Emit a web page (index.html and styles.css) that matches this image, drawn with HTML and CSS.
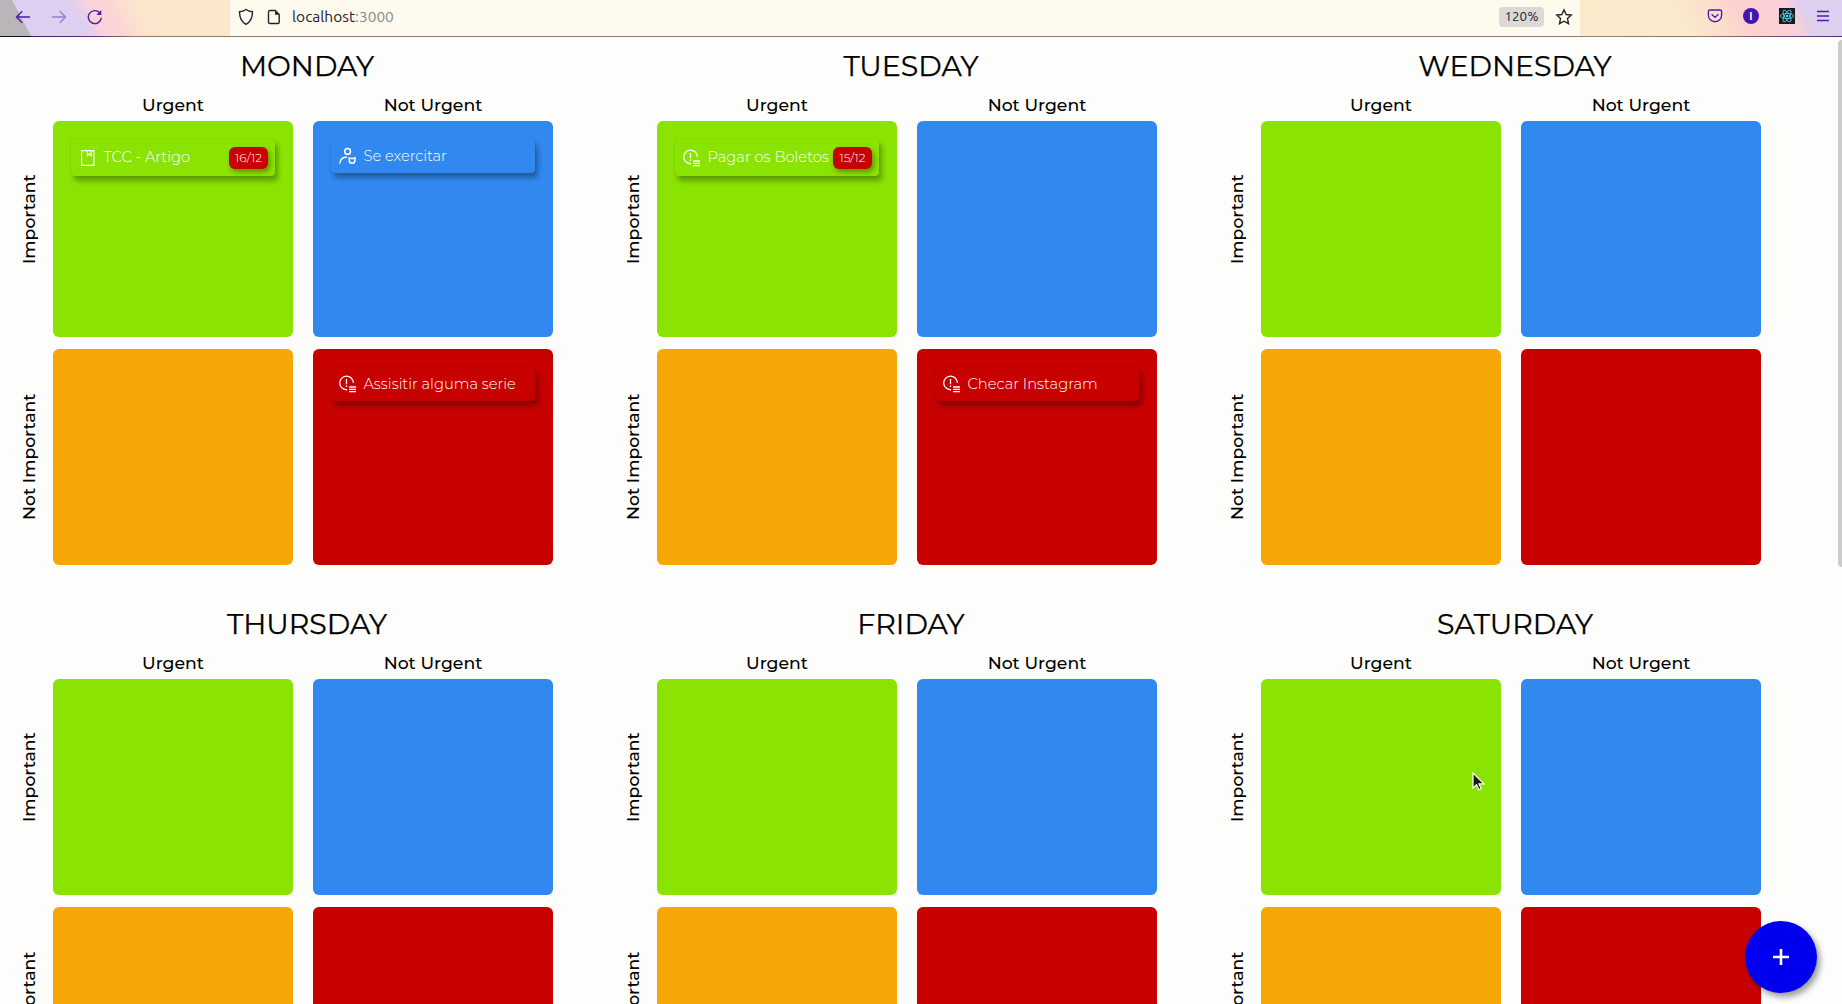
FILE: index.html
```html
<!DOCTYPE html>
<html lang="en">
<head>
<meta charset="utf-8">
<title>Week planner</title>
<link rel="stylesheet" href="styles.css">
</head>
<body>
<svg class="sprite" aria-hidden="true">
  <symbol id="i-book" viewBox="0 0 18 18" fill="none" stroke="currentColor" stroke-width="1.2">
    <path d="M2.600 1.600h12.300v14.800H2.600zM8.500 1.600v5l1.800-1.500 1.800 1.500v-5"/>
  </symbol>
  <symbol id="i-user" viewBox="0 0 18 18" fill="none" stroke="currentColor" stroke-width="1.5">
    <circle cx="8.600" cy="4.400" r="2.900"/><path d="M.8 16.500c.4-3.700 3.200-6.300 7.200-6.400M10.300 10.900l2.800.9 2.800-.9v2.600a2.800 2.800 0 0 1-5.600 0z"/>
  </symbol>
  <symbol id="i-alert" viewBox="0 0 18 18" fill="none" stroke="currentColor" stroke-width="1.3">
    <path d="M8.100 14.700A6.800 6.800 0 1 1 14.300 7.900M7.500 4v5.200M7.500 10.400v1.600M10 12h7M10 14.300h7M10 16.600h7"/>
  </symbol>
</svg>

<header class="toolbar">
  <nav class="nav">
    <svg width="16" height="16" viewBox="0 0 16 16"><path d="M15 8H1.500M7.200 2.300L1.500 8l5.700 5.700"/></svg>
    <svg class="muted" width="16" height="16" viewBox="0 0 16 16"><path d="M1 8h13.500M8.800 2.300L14.500 8l-5.700 5.700"/></svg>
    <svg width="16" height="16" viewBox="0 0 16 16"><path d="M14.300 8.700A6.500 6.500 0 1 1 12.600 3.700"/><path class="solid" d="M14.300 1v5H9.300z"/></svg>
  </nav>
  <div class="address">
    <svg width="16" height="18" viewBox="0 0 16 18"><path d="M8 1.500c2 1.600 4 2.300 6.500 2.300 0 5.500-1.400 9.800-6.500 12.600C2.900 13.600 1.500 9.300 1.500 3.800 4 3.800 6 3.100 8 1.500z"/></svg>
    <svg width="14" height="16" viewBox="0 0 14 16"><path d="M2.800 1.500h5.400l4 4v7.700a1.300 1.300 0 0 1-1.300 1.300H2.800a1.300 1.300 0 0 1-1.300-1.300V2.800a1.300 1.300 0 0 1 1.300-1.300z"/><path class="solid" d="M8 1.500v4.200h4.200z"/></svg>
    <span class="url">localhost<span class="port">:3000</span></span>
    <span class="zoom">120%</span>
    <svg class="star" width="18" height="18" viewBox="0 0 18 18"><path d="M9 1.800l2.200 4.700 5 .6-3.700 3.500 1 5.100L9 13.200l-4.500 2.500 1-5.100L1.800 7.100l5-.6z"/></svg>
  </div>
  <div class="extensions">
    <svg width="16" height="16" viewBox="0 0 16 16"><path d="M3 2h10a1.600 1.600 0 0 1 1.600 1.600v3.600a6.600 6.600 0 0 1-13.200 0V3.600A1.600 1.600 0 0 1 3 2zM4.600 6.200L8 9.400l3.400-3.200"/></svg>
    <span class="avatar">I</span>
    <svg class="react" width="16" height="16" viewBox="0 0 16 16"><rect width="16" height="16"/><g><ellipse cx="8" cy="8" rx="6.600" ry="2.600"/><ellipse cx="8" cy="8" rx="6.600" ry="2.600" transform="rotate(60 8 8)"/><ellipse cx="8" cy="8" rx="6.600" ry="2.600" transform="rotate(120 8 8)"/></g><circle cx="8" cy="8" r="1.300"/></svg>
    <svg width="16" height="14" viewBox="0 0 16 14"><path d="M2 2.500h12M2 7h12M2 11.500h12"/></svg>
  </div>
</header>

<main class="week">
  <section class="board">
    <h2 class="day">MONDAY</h2>
    <span class="col first">Urgent</span><span class="col">Not Urgent</span>
    <span class="row upper">Important</span>
    <div class="cell do"><div class="task dated"><svg class="icon"><use href="#i-book"/></svg><span class="title">TCC - Artigo</span><span class="date">16/12</span></div></div>
    <div class="cell plan"><div class="task"><svg class="icon"><use href="#i-user"/></svg><span class="title">Se exercitar</span></div></div>
    <span class="row">Not Important</span>
    <div class="cell delegate"></div>
    <div class="cell drop"><div class="task"><svg class="icon"><use href="#i-alert"/></svg><span class="title">Assisitir alguma serie</span></div></div>
  </section>
  <section class="board">
    <h2 class="day">TUESDAY</h2>
    <span class="col first">Urgent</span><span class="col">Not Urgent</span>
    <span class="row upper">Important</span>
    <div class="cell do"><div class="task dated"><svg class="icon"><use href="#i-alert"/></svg><span class="title">Pagar os Boletos</span><span class="date">15/12</span></div></div>
    <div class="cell plan"></div>
    <span class="row">Not Important</span>
    <div class="cell delegate"></div>
    <div class="cell drop"><div class="task"><svg class="icon"><use href="#i-alert"/></svg><span class="title">Checar Instagram</span></div></div>
  </section>
  <section class="board">
    <h2 class="day">WEDNESDAY</h2>
    <span class="col first">Urgent</span><span class="col">Not Urgent</span>
    <span class="row upper">Important</span><div class="cell do"></div><div class="cell plan"></div>
    <span class="row">Not Important</span><div class="cell delegate"></div><div class="cell drop"></div>
  </section>
  <section class="board">
    <h2 class="day">THURSDAY</h2>
    <span class="col first">Urgent</span><span class="col">Not Urgent</span>
    <span class="row upper">Important</span><div class="cell do"></div><div class="cell plan"></div>
    <span class="row">Not Important</span><div class="cell delegate"></div><div class="cell drop"></div>
  </section>
  <section class="board">
    <h2 class="day">FRIDAY</h2>
    <span class="col first">Urgent</span><span class="col">Not Urgent</span>
    <span class="row upper">Important</span><div class="cell do"></div><div class="cell plan"></div>
    <span class="row">Not Important</span><div class="cell delegate"></div><div class="cell drop"></div>
  </section>
  <section class="board">
    <h2 class="day">SATURDAY</h2>
    <span class="col first">Urgent</span><span class="col">Not Urgent</span>
    <span class="row upper">Important</span><div class="cell do"></div><div class="cell plan"></div>
    <span class="row">Not Important</span><div class="cell delegate"></div><div class="cell drop"></div>
  </section>
</main>

<div class="scrollbar"></div>
<button class="fab" aria-label="Add task"><svg width="18" height="18" viewBox="0 0 18 18"><path d="M9 1v16M1 9h16"/></svg></button>
<svg class="cursor" width="14" height="20" viewBox="0 0 14 20"><path d="M1 1v15l3.600-3.300 2.300 5 2.300-1-2.200-4.800H12z"/></svg>
</body>
</html>
```
FILE: styles.css
```css
* { box-sizing: border-box; }

html { overflow: hidden; }

body {
  margin: 0;
  height: 1004px;
  overflow: hidden;
  position: relative;
  background: #fdfdfb;
  color: #000;
  font-family: Montserrat, Inter, sans-serif;
}

.sprite { position: absolute; width: 0; height: 0; }

/* Browser toolbar */
.toolbar {
  display: flex;
  align-items: center;
  height: 37px;
  border-bottom: 1px solid #8c7a80;
  border-image: linear-gradient(90deg, #111 30px, #3f2070 34px, #5a2c80 95px, #99785f 135px, #8c8078 300px, #8c8078 1600px, #99785f 1700px, #4a2c80 1842px) 1;
  background:
    linear-gradient(62deg, #b9b5b8 27px, transparent 28px),
    linear-gradient(62deg, #dccff0 78px, #f9d2dc 92px, #fbd5d5 108px, #fbe6cd 135px, #fbe8ca 250px, transparent 251px),
    linear-gradient(62deg, #fbeacb 1490px, #fbdccb 1530px, #fbd0cf 1550px, #fad0d8 1590px, #dccff0 1606px);
  font-family: Ubuntu, "Open Sans", sans-serif;
}
.toolbar svg { display: block; flex: none; fill: none; stroke: #4a1fa5; stroke-width: 1.4; }
.toolbar .solid { fill: currentColor; stroke: none; }
.nav { display: flex; gap: 20px; width: 230px; padding: 0 0 3px 15px; color: #4a1fa5; }
.nav .muted { opacity: .45; }

.address {
  display: flex;
  align-items: center;
  width: 1350px;
  height: 36px;
  padding: 0 7px 3px 8px;
  background: #fefaee;
  color: #28202f;
}
.address svg { stroke: #28202f; }
.address svg + svg { margin-left: 13px; }
.url { margin-left: 11px; font-size: 15.500px; line-height: 20px; white-space: pre; }
.port { color: #8d898c; }
.zoom {
  width: 45px;
  height: 20px;
  margin-left: auto;
  border-radius: 4px;
  background: #dad9d6;
  font-size: 13.500px;
  line-height: 19px;
  text-align: center;
}
.address .star { margin-left: 11px; }

.extensions { display: flex; align-items: center; gap: 20px; padding: 0 0 4px 127px; }
.avatar {
  width: 16px;
  height: 16px;
  border-radius: 50%;
  background: #4413b5;
  color: #fff;
  font-size: 11px;
  font-weight: 700;
  line-height: 16px;
  text-align: center;
}
.toolbar .react { stroke: #61dafb; stroke-width: .8; }
.react rect { fill: #141a1c; stroke: none; }
.react circle { fill: #61dafb; stroke: none; }

/* Week grid */
.week {
  display: grid;
  grid-template-columns: repeat(3, 604px);
  grid-template-rows: 558px 399px;
  height: 967px;
  overflow: hidden;
  padding-top: 10px;
}
.board {
  display: grid;
  grid-template-columns: 24px 240px 240px;
  grid-template-rows: 38px 36px 216px 216px;
  column-gap: 20px;
  row-gap: 0;
  align-content: start;
  padding-left: 9px;
}
.day {
  grid-column: 1 / -1;
  margin: 0;
  padding-left: 52px;
  font-size: 28.400px;
  font-weight: 400;
  line-height: 38px;
  text-align: center;
  -webkit-text-stroke: .25px #000;
}
.col, .row { font-size: 17.280px; font-weight: 500; }
.col { line-height: 40px; text-align: center; }
.col.first { grid-column: 2; }
.row {
  writing-mode: vertical-rl;
  transform: rotate(180deg);
  width: 24px;
  margin: 12px 0 -12px 8px;
  line-height: 24px;
  text-align: center;
}
.row.upper { margin-top: -10px; margin-bottom: 10px; }
.cell { padding: 18px; border-radius: 6px; }
.do { background: #8ae303; }
.plan { background: #3188ef; }
.delegate { background: #f6a605; }
.drop { background: #c70000; }
.delegate, .drop { margin: 12px 0 -12px; }

.task {
  display: flex;
  align-items: center;
  height: 34px;
  padding: 0 7px 0 8px;
  border-radius: 4px;
  box-shadow: 3px 5px 5px rgba(0, 0, 0, .3), 0 0 2px rgba(0, 0, 0, .12);
  color: #fff;
}
.task.dated { height: 37px; }
.icon { flex: none; width: 18px; height: 18px; }
.title { margin: -1px 0 0 6.500px; font-size: 14.700px; font-weight: 300; white-space: nowrap; }
.date {
  width: 39px;
  height: 22px;
  margin-left: auto;
  border-radius: 6px;
  background: #c80000;
  box-shadow: 2px 3px 5px rgba(0, 0, 0, .35);
  font-size: 12px;
  font-weight: 300;
  line-height: 22px;
  text-align: center;
}

/* Overlays */
.scrollbar { position: absolute; top: 40px; right: 0; width: 4px; height: 527px; border-radius: 4px 0 0 4px; background: #cdccca; }
.fab {
  position: absolute;
  right: 25px;
  bottom: 11px;
  display: grid;
  place-items: center;
  width: 72px;
  height: 72px;
  padding: 0;
  border: 0;
  border-radius: 50%;
  background: #0000ee;
  box-shadow: 3px 4px 6px rgba(0, 0, 0, .4);
}
.fab svg { fill: none; stroke: #fff; stroke-width: 2.600; }
.cursor { position: absolute; left: 1472px; top: 772px; fill: #1b1b16; stroke: #fff; stroke-width: 1.200; }
```
